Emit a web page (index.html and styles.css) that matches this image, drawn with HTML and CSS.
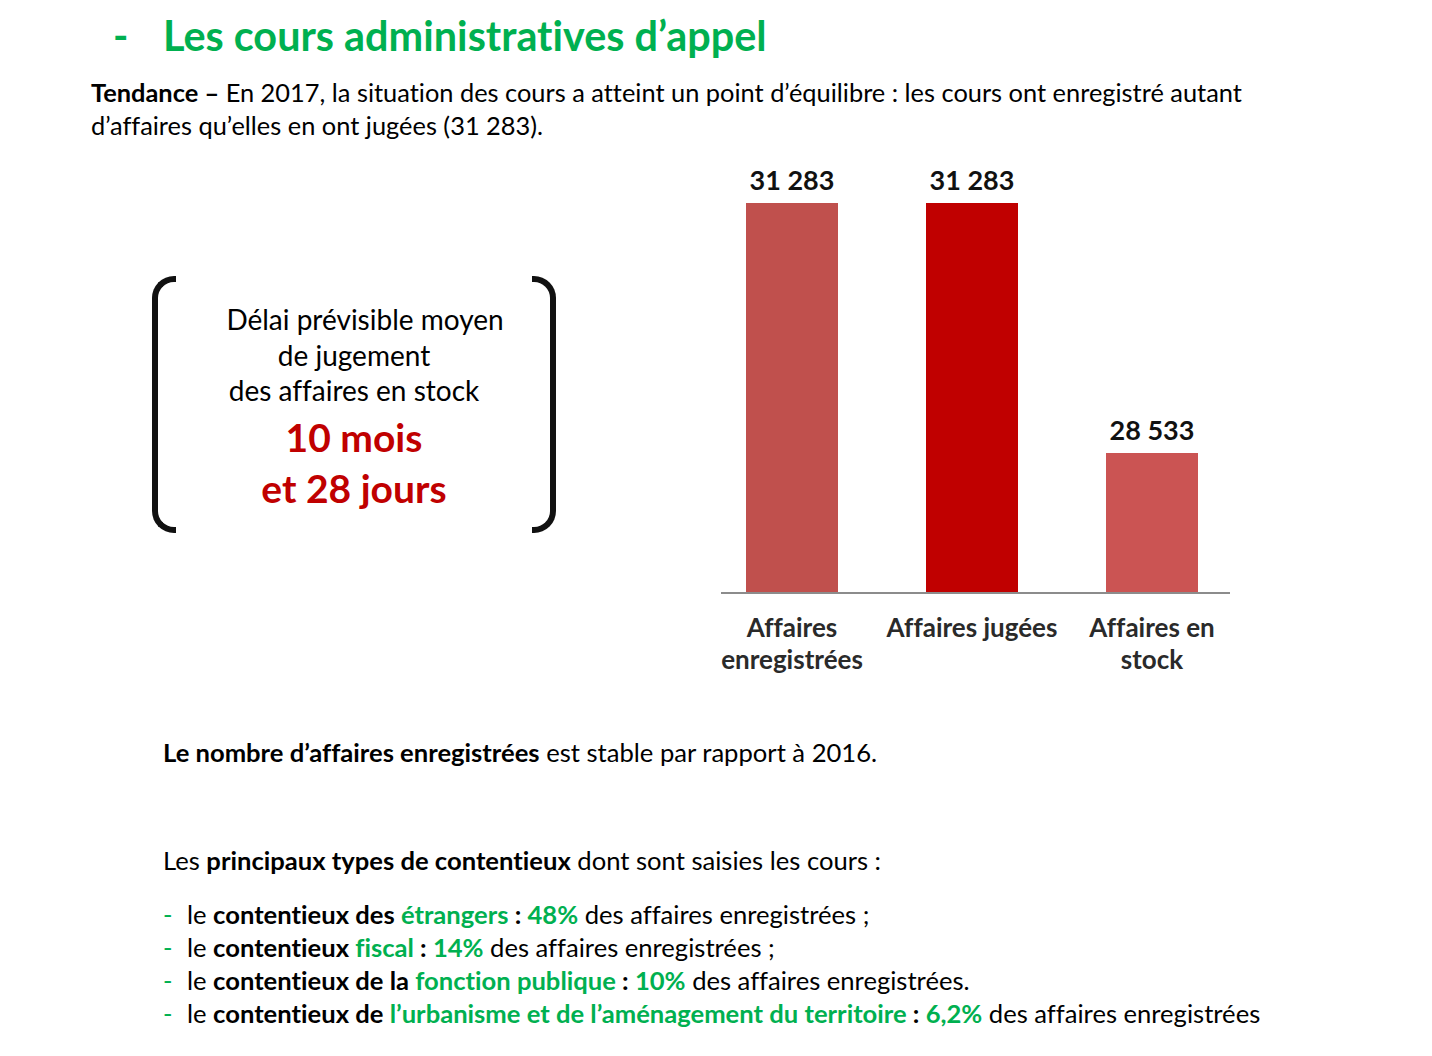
FILE: index.html
```html
<!DOCTYPE html>
<html lang="fr">
<head>
<meta charset="utf-8">
<title>Les cours administratives d’appel</title>
<link rel="stylesheet" href="styles.css">
</head>
<body>
<h1 class="title"><span class="title-dash">-</span><span>Les cours administratives d’appel</span></h1>
<p class="intro"><b>Tendance –</b> En 2017, la situation des cours a atteint un point d’équilibre : les cours ont enregistré autant<br>d’affaires qu’elles en ont jugées (31 283).</p>

<div class="figure">
  <div class="delay">
    <div class="bracket bracket-left"></div>
    <div class="delay-text">
      <p class="delay-label"><span class="delay-first">Délai prévisible moyen</span><br>de jugement<br>des affaires en stock</p>
      <p class="delay-value">10 mois<br>et 28 jours</p>
    </div>
    <div class="bracket bracket-right"></div>
  </div>

  <div class="chart">
    <div class="plot">
      <div class="col">
        <span class="val">31 283</span>
        <div class="bar bar-reg" style="height:389px"></div>
      </div>
      <div class="col">
        <span class="val">31 283</span>
        <div class="bar bar-jug" style="height:389px"></div>
      </div>
      <div class="col">
        <span class="val">28 533</span>
        <div class="bar bar-stock" style="height:139px"></div>
      </div>
    </div>
    <div class="axis"></div>
    <div class="cats">
      <span class="cat">Affaires<br>enregistrées</span>
      <span class="cat">Affaires jugées</span>
      <span class="cat">Affaires en<br>stock</span>
    </div>
  </div>
</div>

<p class="note"><b>Le nombre d’affaires enregistrées</b> est stable par rapport à 2016.</p>

<p class="types">Les <b>principaux types de contentieux</b> dont sont saisies les cours :</p>
<ul class="list">
  <li><span class="dash">-</span><span>le <b>contentieux des <span class="g">étrangers</span> : <span class="g">48%</span></b> des affaires enregistrées ;</span></li>
  <li><span class="dash">-</span><span>le <b>contentieux <span class="g">fiscal</span> : <span class="g">14%</span></b> des affaires enregistrées ;</span></li>
  <li><span class="dash">-</span><span>le <b>contentieux de la <span class="g">fonction publique</span> : <span class="g">10%</span></b> des affaires enregistrées.</span></li>
  <li><span class="dash">-</span><span>le <b>contentieux de <span class="g">l’urbanisme et de l’aménagement du territoire</span> : <span class="g">6,2%</span></b> des affaires enregistrées</span></li>
</ul>
</body>
</html>
```

FILE: styles.css
```css
html, body {
  margin: 0;
  padding: 0;
  background: #ffffff;
}

body {
  font-family: "Lato", "Open Sans", sans-serif;
  color: #000000;
  width: 1432px;
  font-variant-ligatures: no-common-ligatures;
}

b {
  font-weight: 700;
}

.title {
  margin: 0;
  padding: 11px 0 0 113px;
  display: flex;
  font-size: 41.4px;
  line-height: 48px;
  font-weight: 700;
  color: #00b050;
}

.title-dash {
  width: 50px;
}

.intro {
  margin: 17px 0 0 91px;
  font-size: 25.4px;
  line-height: 33px;
  white-space: nowrap;
}

.figure {
  display: flex;
  margin-top: 18px;
  height: 530px;
}

.delay {
  margin: 116px 0 0 152px;
  width: 404px;
  height: 257px;
  display: flex;
  justify-content: space-between;
}

.bracket {
  width: 18px;
  height: 245px;
  border: 6px solid #111111;
}

.bracket-left {
  border-right: none;
  border-radius: 22px 0 0 22px;
}

.bracket-right {
  border-left: none;
  border-radius: 0 22px 22px 0;
}

.delay-text {
  flex: 1;
  text-align: center;
  padding-top: 26px;
}

.delay-text p {
  margin: 0;
}

.delay-label {
  font-size: 28px;
  line-height: 35.5px;
  white-space: nowrap;
}

.delay-first {
  padding-left: 22px;
}

.delay-value {
  margin-top: 3px !important;
  font-size: 39px;
  line-height: 51px;
  font-weight: 700;
  color: #c00000;
}

.chart {
  margin-left: 146px;
  width: 540px;
}

.plot {
  display: flex;
  height: 432px;
  align-items: flex-end;
}

.col {
  width: 180px;
  display: flex;
  flex-direction: column;
  align-items: center;
}

.val {
  font-size: 27px;
  line-height: 30px;
  font-weight: 700;
  color: #111111;
  margin-bottom: 8px;
}

.bar {
  width: 92px;
}

.bar-reg {
  background: #c0504d;
}

.bar-jug {
  background: #c00000;
}

.bar-stock {
  background: #cb5453;
}

.axis {
  margin-left: 19px;
  width: 509px;
  height: 2px;
  background: #8c8c8c;
}

.cats {
  display: flex;
  padding-top: 17px;
}

.cat {
  width: 180px;
  text-align: center;
  font-size: 26px;
  line-height: 32px;
  font-weight: 700;
  color: #2a2a2a;
  white-space: nowrap;
}

.note {
  margin: 46px 0 0 163px;
  font-size: 25.6px;
  line-height: 33px;
}

.types {
  margin: 75px 0 0 163px;
  font-size: 25.6px;
  line-height: 33px;
}

.list {
  list-style: none;
  margin: 21px 0 0 163px;
  padding: 0;
  font-size: 25.6px;
  line-height: 33px;
}

.list li {
  display: flex;
  white-space: nowrap;
}

.dash {
  width: 24px;
  color: #00b050;
}

.g {
  color: #00b050;
}
```
